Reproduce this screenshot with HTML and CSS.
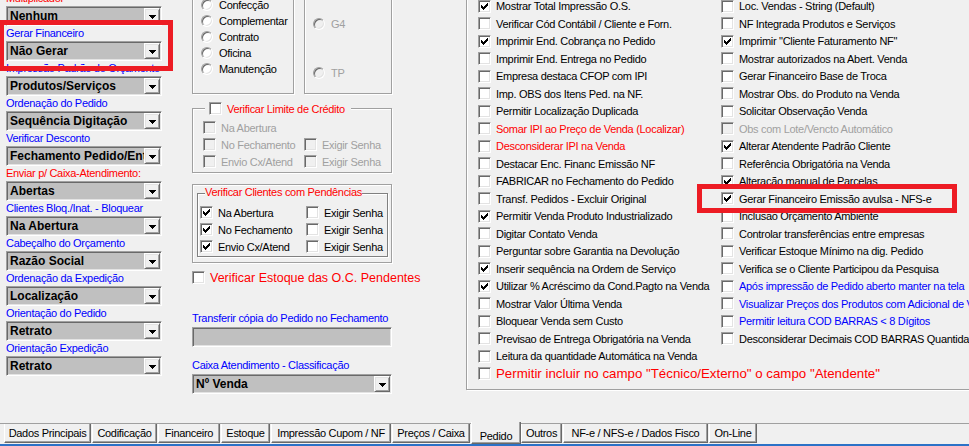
FILE: index.html
```html
<!DOCTYPE html>
<html lang="pt-BR">
<head>
<meta charset="utf-8">
<title>Pedido</title>
<link rel="stylesheet" href="styles.css">
</head>
<body>
<div class="page">
  <div class="content">
    <div class="leftcol">
      <div class="field"><div class="lbl red">Multiplicador</div><div class="combo"><span class="cv">Nenhum</span><span class="dd"><svg width="7" height="4" viewBox="0 0 7 4"><path d="M0 0h7v1h-1v1h-1v1h-1v1h-1v-1h-1v-1h-1v-1h-1z"/></svg></span></div></div>
      <div class="field"><div class="lbl blue">Gerar Financeiro</div><div class="combo"><span class="cv">Não Gerar</span><span class="dd"><svg width="7" height="4" viewBox="0 0 7 4"><path d="M0 0h7v1h-1v1h-1v1h-1v1h-1v-1h-1v-1h-1v-1h-1z"/></svg></span></div></div>
      <div class="field"><div class="lbl blue">Impressão Padrão do Orçamento</div><div class="combo"><span class="cv">Produtos/Serviços</span><span class="dd"><svg width="7" height="4" viewBox="0 0 7 4"><path d="M0 0h7v1h-1v1h-1v1h-1v1h-1v-1h-1v-1h-1v-1h-1z"/></svg></span></div></div>
      <div class="field"><div class="lbl blue">Ordenação do Pedido</div><div class="combo"><span class="cv">Sequência Digitação</span><span class="dd"><svg width="7" height="4" viewBox="0 0 7 4"><path d="M0 0h7v1h-1v1h-1v1h-1v1h-1v-1h-1v-1h-1v-1h-1z"/></svg></span></div></div>
      <div class="field"><div class="lbl blue">Verificar Desconto</div><div class="combo"><span class="cv">Fechamento Pedido/Entrega</span><span class="dd"><svg width="7" height="4" viewBox="0 0 7 4"><path d="M0 0h7v1h-1v1h-1v1h-1v1h-1v-1h-1v-1h-1v-1h-1z"/></svg></span></div></div>
      <div class="field"><div class="lbl red">Enviar p/ Caixa-Atendimento:</div><div class="combo"><span class="cv">Abertas</span><span class="dd"><svg width="7" height="4" viewBox="0 0 7 4"><path d="M0 0h7v1h-1v1h-1v1h-1v1h-1v-1h-1v-1h-1v-1h-1z"/></svg></span></div></div>
      <div class="field"><div class="lbl blue">Clientes Bloq./Inat. - Bloquear</div><div class="combo"><span class="cv">Na Abertura</span><span class="dd"><svg width="7" height="4" viewBox="0 0 7 4"><path d="M0 0h7v1h-1v1h-1v1h-1v1h-1v-1h-1v-1h-1v-1h-1z"/></svg></span></div></div>
      <div class="field"><div class="lbl blue">Cabeçalho do Orçamento</div><div class="combo"><span class="cv">Razão Social</span><span class="dd"><svg width="7" height="4" viewBox="0 0 7 4"><path d="M0 0h7v1h-1v1h-1v1h-1v1h-1v-1h-1v-1h-1v-1h-1z"/></svg></span></div></div>
      <div class="field"><div class="lbl blue">Ordenação da Expedição</div><div class="combo"><span class="cv">Localização</span><span class="dd"><svg width="7" height="4" viewBox="0 0 7 4"><path d="M0 0h7v1h-1v1h-1v1h-1v1h-1v-1h-1v-1h-1v-1h-1z"/></svg></span></div></div>
      <div class="field"><div class="lbl blue">Orientação do Pedido</div><div class="combo"><span class="cv">Retrato</span><span class="dd"><svg width="7" height="4" viewBox="0 0 7 4"><path d="M0 0h7v1h-1v1h-1v1h-1v1h-1v-1h-1v-1h-1v-1h-1z"/></svg></span></div></div>
      <div class="field"><div class="lbl blue">Orientação Expedição</div><div class="combo"><span class="cv">Retrato</span><span class="dd"><svg width="7" height="4" viewBox="0 0 7 4"><path d="M0 0h7v1h-1v1h-1v1h-1v1h-1v-1h-1v-1h-1v-1h-1z"/></svg></span></div></div>
    </div>

    <div class="midcol">
      <div class="radiorow">
        <div class="etch rbox1">
          <div class="rrow"><span class="rb"></span><span>Confecção</span></div>
          <div class="rrow"><span class="rb"></span><span>Complementar</span></div>
          <div class="rrow"><span class="rb"></span><span>Contrato</span></div>
          <div class="rrow"><span class="rb"></span><span>Oficina</span></div>
          <div class="rrow"><span class="rb"></span><span>Manutenção</span></div>
        </div>
        <div class="etch rbox2">
          <div class="rrow gray"><span class="rb dis"></span><span>G4</span></div>
          <div class="rrow gray tp"><span class="rb dis"></span><span>TP</span></div>
        </div>
      </div>

      <div class="etch limite">
        <div class="legend"><span class="cb"></span><span class="red">Verificar Limite de Crédito</span></div>
        <div class="crow gray"><div class="cell1"><span class="cb dis"></span><span>Na Abertura</span></div></div>
        <div class="crow gray"><div class="cell1"><span class="cb dis"></span><span>No Fechamento</span></div><div class="cell"><span class="cb dis"></span><span>Exigir Senha</span></div></div>
        <div class="crow gray"><div class="cell1"><span class="cb dis"></span><span>Envio Cx/Atend</span></div><div class="cell"><span class="cb dis"></span><span>Exigir Senha</span></div></div>
      </div>

      <div class="etch pend">
        <div class="pendbox">
          <div class="ptitle red">Verificar Clientes com Pendências</div>
          <div class="crow"><div class="cell1 w106"><span class="cb"><svg class="ck" viewBox="0 0 7 7"><path d="M0 2h1v1h1v1h1v-1h1v-1h1v-1h1v-1h1v3h-1v1h-1v1h-1v1h-1v1h-1v-1h-1v-1h-1z"/></svg></span><span>Na Abertura</span></div><div class="cell"><span class="cb"></span><span>Exigir Senha</span></div></div>
          <div class="crow"><div class="cell1 w106"><span class="cb"><svg class="ck" viewBox="0 0 7 7"><path d="M0 2h1v1h1v1h1v-1h1v-1h1v-1h1v-1h1v3h-1v1h-1v1h-1v1h-1v1h-1v-1h-1v-1h-1z"/></svg></span><span>No Fechamento</span></div><div class="cell"><span class="cb"></span><span>Exigir Senha</span></div></div>
          <div class="crow"><div class="cell1 w106"><span class="cb"><svg class="ck" viewBox="0 0 7 7"><path d="M0 2h1v1h1v1h1v-1h1v-1h1v-1h1v-1h1v3h-1v1h-1v1h-1v1h-1v1h-1v-1h-1v-1h-1z"/></svg></span><span>Envio Cx/Atend</span></div><div class="cell"><span class="cb"></span><span>Exigir Senha</span></div></div>
        </div>
      </div>

      <div class="estoque"><span class="cb"></span><span class="red">Verificar Estoque das O.C. Pendentes</span></div>

      <div class="lbl blue lbl-transf">Transferir cópia do Pedido no Fechamento</div>
      <div class="edit"></div>
      <div class="lbl blue lbl-caixa">Caixa Atendimento - Classificação</div>
      <div class="combo"><span class="cv">Nº Venda</span><span class="dd"><svg width="7" height="4" viewBox="0 0 7 4"><path d="M0 0h7v1h-1v1h-1v1h-1v1h-1v-1h-1v-1h-1v-1h-1z"/></svg></span></div>
    </div>

    <div class="etch rgroup">
      <div class="rc1">
        <div class="opt"><span class="cb"><svg class="ck" viewBox="0 0 7 7"><path d="M0 2h1v1h1v1h1v-1h1v-1h1v-1h1v-1h1v3h-1v1h-1v1h-1v1h-1v1h-1v-1h-1v-1h-1z"/></svg></span><span>Mostrar Total Impressão O.S.</span></div>
        <div class="opt"><span class="cb"></span><span>Verificar Cód Contábil / Cliente e Forn.</span></div>
        <div class="opt"><span class="cb"><svg class="ck" viewBox="0 0 7 7"><path d="M0 2h1v1h1v1h1v-1h1v-1h1v-1h1v-1h1v3h-1v1h-1v1h-1v1h-1v1h-1v-1h-1v-1h-1z"/></svg></span><span>Imprimir End. Cobrança no Pedido</span></div>
        <div class="opt"><span class="cb"></span><span>Imprimir End. Entrega no Pedido</span></div>
        <div class="opt"><span class="cb"></span><span>Empresa destaca CFOP com IPI</span></div>
        <div class="opt"><span class="cb"></span><span>Imp. OBS dos Itens Ped. na NF.</span></div>
        <div class="opt"><span class="cb"></span><span>Permitir Localização Duplicada</span></div>
        <div class="opt red"><span class="cb"></span><span>Somar IPI ao Preço de Venda (Localizar)</span></div>
        <div class="opt red"><span class="cb"></span><span>Desconsiderar IPI na Venda</span></div>
        <div class="opt"><span class="cb"></span><span>Destacar Enc. Financ Emissão NF</span></div>
        <div class="opt"><span class="cb"></span><span>FABRICAR no Fechamento do Pedido</span></div>
        <div class="opt"><span class="cb"></span><span>Transf. Pedidos - Excluir Original</span></div>
        <div class="opt"><span class="cb"><svg class="ck" viewBox="0 0 7 7"><path d="M0 2h1v1h1v1h1v-1h1v-1h1v-1h1v-1h1v3h-1v1h-1v1h-1v1h-1v1h-1v-1h-1v-1h-1z"/></svg></span><span>Permitir Venda Produto Industrializado</span></div>
        <div class="opt"><span class="cb"></span><span>Digitar Contato Venda</span></div>
        <div class="opt"><span class="cb"></span><span>Perguntar sobre Garantia na Devolução</span></div>
        <div class="opt"><span class="cb"><svg class="ck" viewBox="0 0 7 7"><path d="M0 2h1v1h1v1h1v-1h1v-1h1v-1h1v-1h1v3h-1v1h-1v1h-1v1h-1v1h-1v-1h-1v-1h-1z"/></svg></span><span>Inserir sequência na Ordem de Serviço</span></div>
        <div class="opt"><span class="cb"><svg class="ck" viewBox="0 0 7 7"><path d="M0 2h1v1h1v1h1v-1h1v-1h1v-1h1v-1h1v3h-1v1h-1v1h-1v1h-1v1h-1v-1h-1v-1h-1z"/></svg></span><span>Utilizar % Acréscimo da Cond.Pagto na Venda</span></div>
        <div class="opt"><span class="cb"></span><span>Mostrar Valor Última Venda</span></div>
        <div class="opt"><span class="cb"></span><span>Bloquear Venda sem Custo</span></div>
        <div class="opt"><span class="cb"></span><span>Previsao de Entrega Obrigatória na Venda</span></div>
        <div class="opt"><span class="cb"></span><span>Leitura da quantidade Automática na Venda</span></div>
        <div class="opt red big"><span class="cb"></span><span>Permitir incluir no campo "Técnico/Externo" o campo "Atendente"</span></div>
      </div>
      <div class="rc2">
        <div class="opt"><span class="cb"></span><span>Loc. Vendas - String (Default)</span></div>
        <div class="opt"><span class="cb"></span><span>NF Integrada Produtos e Serviços</span></div>
        <div class="opt"><span class="cb"><svg class="ck" viewBox="0 0 7 7"><path d="M0 2h1v1h1v1h1v-1h1v-1h1v-1h1v-1h1v3h-1v1h-1v1h-1v1h-1v1h-1v-1h-1v-1h-1z"/></svg></span><span>Imprimir "Cliente Faturamento NF"</span></div>
        <div class="opt"><span class="cb"></span><span>Mostrar autorizados na Abert. Venda</span></div>
        <div class="opt"><span class="cb"></span><span>Gerar Financeiro Base de Troca</span></div>
        <div class="opt"><span class="cb"></span><span>Mostrar Obs. do Produto na Venda</span></div>
        <div class="opt"><span class="cb"></span><span>Solicitar Observação Venda</span></div>
        <div class="opt gray"><span class="cb dis"></span><span>Obs com Lote/Vencto Automático</span></div>
        <div class="opt"><span class="cb"><svg class="ck" viewBox="0 0 7 7"><path d="M0 2h1v1h1v1h1v-1h1v-1h1v-1h1v-1h1v3h-1v1h-1v1h-1v1h-1v1h-1v-1h-1v-1h-1z"/></svg></span><span>Alterar Atendente Padrão Cliente</span></div>
        <div class="opt"><span class="cb"></span><span>Referência Obrigatória na Venda</span></div>
        <div class="opt"><span class="cb"><svg class="ck" viewBox="0 0 7 7"><path d="M0 2h1v1h1v1h1v-1h1v-1h1v-1h1v-1h1v3h-1v1h-1v1h-1v1h-1v1h-1v-1h-1v-1h-1z"/></svg></span><span>Alteração manual de Parcelas</span></div>
        <div class="opt"><span class="cb"><svg class="ck" viewBox="0 0 7 7"><path d="M0 2h1v1h1v1h1v-1h1v-1h1v-1h1v-1h1v3h-1v1h-1v1h-1v1h-1v1h-1v-1h-1v-1h-1z"/></svg></span><span>Gerar Financeiro Emissão avulsa - NFS-e</span></div>
        <div class="opt"><span class="cb"></span><span>Inclusão Orçamento Ambiente</span></div>
        <div class="opt"><span class="cb"></span><span>Controlar transferências entre empresas</span></div>
        <div class="opt"><span class="cb"></span><span>Verificar Estoque Mínimo na dig. Pedido</span></div>
        <div class="opt"><span class="cb"></span><span>Verifica se o Cliente Participou da Pesquisa</span></div>
        <div class="opt blue"><span class="cb"></span><span>Após impressão de Pedido aberto manter na tela</span></div>
        <div class="opt blue"><span class="cb"></span><span>Visualizar Preços dos Produtos com Adicional de Venda</span></div>
        <div class="opt blue"><span class="cb"></span><span>Permitir leitura COD BARRAS &lt; 8 Dígitos</span></div>
        <div class="opt"><span class="cb"></span><span>Desconsiderar Decimais COD BARRAS Quantidade</span></div>
      </div>
    </div>
  </div>

  <div class="tabbar">
    <div class="tab">Dados Principais</div>
    <div class="tab">Codificação</div>
    <div class="tab">Financeiro</div>
    <div class="tab">Estoque</div>
    <div class="tab">Impressão Cupom / NF</div>
    <div class="tab">Preços / Caixa</div>
    <div class="tab active">Pedido</div>
    <div class="tab">Outros</div>
    <div class="tab">NF-e / NFS-e / Dados Fisco</div>
    <div class="tab">On-Line</div>
  </div>
  <div class="blueline"></div>

  <div class="mark mark-left"></div>
  <div class="mark mark-right"></div>
</div>
</body>
</html>
```

FILE: styles.css
```css
* { box-sizing: border-box; }
html, body { margin: 0; padding: 0; }
body {
  background: #f0f0f0;
  font-family: "Liberation Sans", Arial, sans-serif;
  font-size: 11px;
  letter-spacing: -0.3px;
  color: #000;
}
.page { width: 969px; height: 446px; position: relative; overflow: hidden; }
.content { height: 422px; display: flex; align-items: flex-start; }

.blue { color: #0000ff; }
.red { color: #ff0000; }
.gray { color: #a0a0a0; }

/* generic controls */
.lbl { height: 15px; line-height: 15px; white-space: nowrap; }
.combo {
  height: 20px;
  display: flex;
  align-items: center;
  padding: 1px;
  border: 1px solid;
  border-color: #a0a0a0 #fff #fff #a0a0a0;
  box-shadow: inset 1px 1px 0 #696969, inset -1px -1px 0 #e3e3e3;
  background: #c0c0c0;
}
.cv {
  flex: 1;
  min-width: 0;
  overflow: hidden;
  white-space: nowrap;
  font-weight: bold;
  font-size: 12px;
  letter-spacing: 0;
  padding-left: 2px;
  line-height: 16px;
}
.dd {
  width: 16px;
  height: 16px;
  flex: none;
  background: #f0f0f0;
  border: 1px solid;
  border-color: #fff #696969 #696969 #fff;
  box-shadow: inset 1px 1px 0 #e3e3e3, inset -1px -1px 0 #a0a0a0;
  display: flex;
  align-items: center;
  justify-content: center;
  padding: 2px 0 0 1px;
}
.dd svg { display: block; shape-rendering: crispEdges; }
.edit {
  height: 20px;
  border: 1px solid;
  border-color: #a0a0a0 #fff #fff #a0a0a0;
  box-shadow: inset 1px 1px 0 #696969, inset -1px -1px 0 #e3e3e3;
  background: #c0c0c0;
}
.cb {
  width: 13px;
  height: 13px;
  flex: none;
  display: block;
  background: #fff;
  border: 1px solid;
  border-color: #a0a0a0 #fff #fff #a0a0a0;
  box-shadow: inset 1px 1px 0 #696969, inset -1px -1px 0 #e3e3e3;
  padding: 2px;
}
.cb.dis { background: #f0f0f0; }
.ck { display: block; width: 7px; height: 7px; shape-rendering: crispEdges; }
.rb {
  width: 12px;
  height: 12px;
  flex: none;
  border-radius: 50%;
  background: #fff;
  border: 1px solid;
  border-color: #a0a0a0 #fff #fff #a0a0a0;
  box-shadow: inset 1px 1px 0 #696969, inset -1px -1px 0 #e3e3e3;
}
.rb.dis { background: #f0f0f0; }
.etch {
  border: 1px solid #a0a0a0;
  box-shadow: inset 1px 1px 0 #fff, 1px 1px 0 #fff;
}

/* left column */
.leftcol { width: 156px; margin-left: 6px; margin-top: -9px; flex: none; }

/* middle column */
.midcol { width: 200px; margin-left: 30px; margin-top: -10px; flex: none; }
.radiorow { display: flex; gap: 10px; height: 104px; }
.rbox1 { width: 102px; flex: none; padding: 6px 0 0 8px; }
.rbox2 { flex: 1; padding: 25px 0 0 8px; }
.rrow { height: 16px; display: flex; align-items: center; gap: 6px; white-space: nowrap; }
.rrow.tp { margin-top: 33px; }

.limite { margin-top: 14px; height: 65px; position: relative; padding: 10px 0 0 10px; }
.legend {
  position: absolute;
  top: -7px;
  left: 12px;
  height: 13px;
  padding: 0 6px 0 4px;
  background: #f0f0f0;
  display: flex;
  align-items: center;
  gap: 5px;
  white-space: nowrap;
}
.crow { height: 17px; display: flex; align-items: center; white-space: nowrap; }
.cell1 { width: 101px; flex: none; display: flex; align-items: center; gap: 5px; }
.cell1.w106 { width: 106px; }
.cell { display: flex; align-items: center; gap: 5px; }

.pend { margin-top: 11px; height: 79px; padding: 8px 3px 0 4px; }
.pendbox {
  height: 64px;
  position: relative;
  padding: 10px 0 0 2px;
  border: 1px solid #808080;
  box-shadow: inset 1px 1px 0 #fff, 1px 1px 0 #fff;
}
.ptitle {
  position: absolute;
  top: -8px;
  left: 7px;
  line-height: 13px;
  background: #f0f0f0;
  white-space: nowrap;
}
.estoque {
  margin-top: 6px;
  height: 17px;
  display: flex;
  align-items: center;
  gap: 5px;
  font-size: 12.5px;
  letter-spacing: 0;
  white-space: nowrap;
}
.lbl-transf { margin-top: 25px; margin-bottom: 1px; }
.lbl-caixa { margin-top: 11px; margin-bottom: 1px; }

/* right group */
.rgroup {
  margin-left: 74px;
  margin-top: -10px;
  width: 540px;
  height: 400px;
  flex: none;
  display: flex;
  padding: 6.25px 0 0 11px;
}
.rc1 { width: 243px; flex: none; }
.rc2 { flex: 1; }
.opt { height: 17.5px; display: flex; align-items: center; gap: 5px; white-space: nowrap; }
.opt.big { font-size: 13.3px; letter-spacing: 0; }

/* tabs */
.tabbar {
  height: 22px;
  position: relative;
  display: flex;
  align-items: flex-start;
  padding-left: 4px;
}
.tabbar::before {
  content: "";
  position: absolute;
  left: 0;
  right: 0;
  top: 1px;
  height: 1px;
  background: #a0a0a0;
}
.tab {
  margin-top: 2px;
  height: 19px;
  margin-right: 1px;
  flex: none;
  border-left: 1px solid #fff;
  border-right: 1px solid #696969;
  border-bottom: 1px solid #696969;
  box-shadow: inset -1px -1px 0 #a0a0a0;
  text-align: center;
  line-height: 18px;
  white-space: nowrap;
  position: relative;
}
.tab.active {
  margin-top: 0;
  height: 22px;
  padding-top: 6px;
  line-height: 16px;
  background: #f0f0f0;
  z-index: 1;
  margin-right: 0;
}
.tab:nth-child(1) { width: 87px; }
.tab:nth-child(2) { width: 65px; }
.tab:nth-child(3) { width: 62px; }
.tab:nth-child(4) { width: 49px; }
.tab:nth-child(5) { width: 120px; }
.tab:nth-child(6) { width: 78px; }
.tab:nth-child(7) { width: 50px; }
.tab:nth-child(8) { width: 41px; }
.tab:nth-child(9) { width: 145px; }
.tab:nth-child(10) { width: 48px; }
.blueline { height: 2px; background: #2c72c7; }

/* annotation overlays */
.mark { position: absolute; border: 5px solid #ed1c24; }
.mark-left { left: -1px; top: 20px; width: 174px; height: 51px; }
.mark-right { left: 697px; top: 184px; width: 260px; height: 29px; }
```
